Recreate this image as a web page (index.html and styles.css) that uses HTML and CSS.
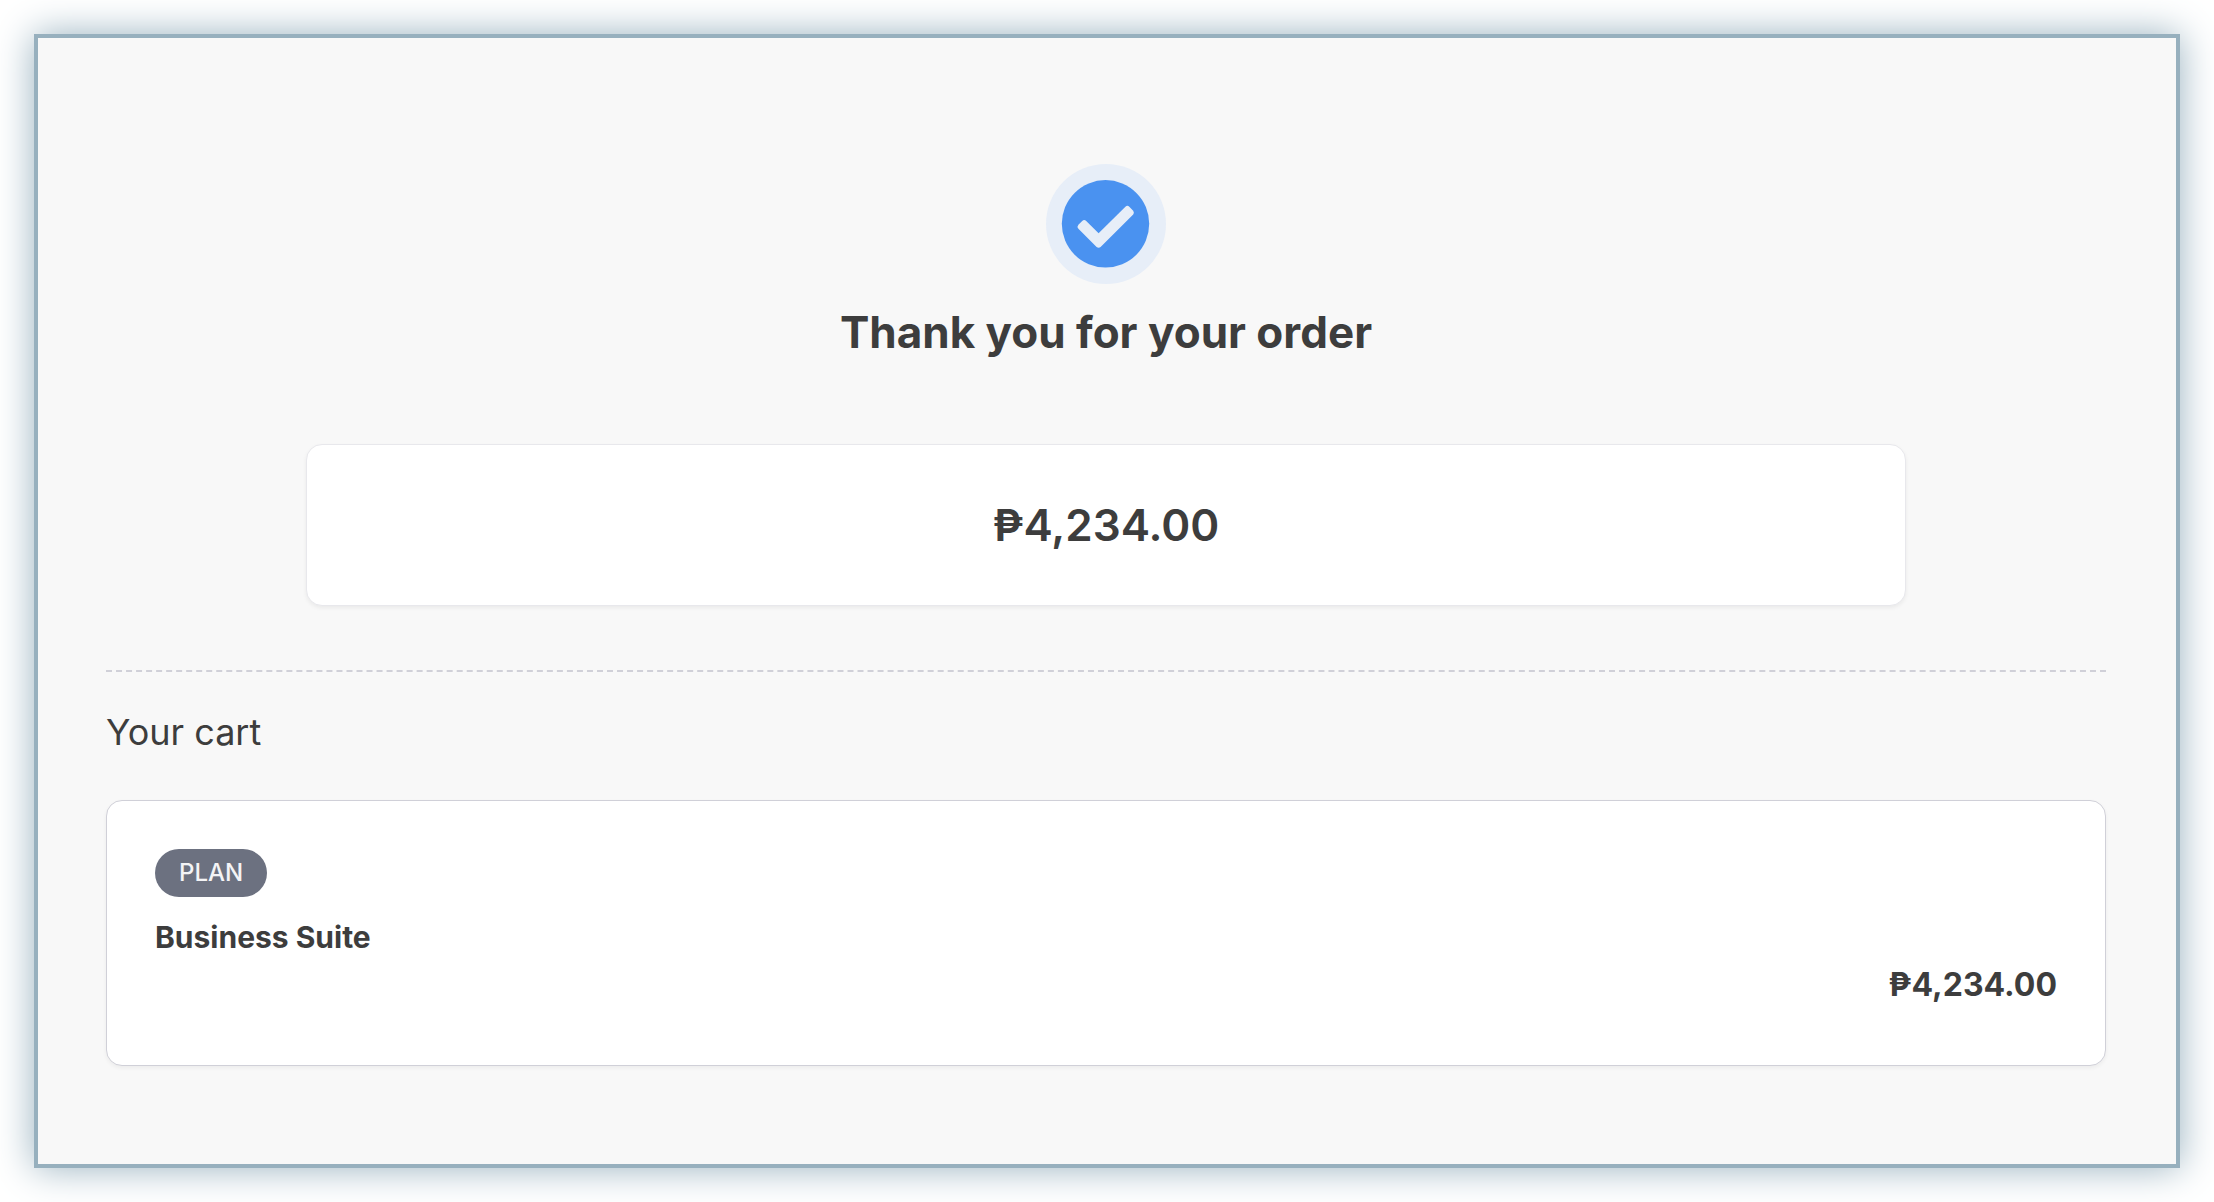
FILE: index.html
```
<!DOCTYPE html>
<html lang="en">
<head>
    <meta charset="UTF-8">
    <meta name="viewport" content="width=device-width, initial-scale=1.0">
    <title>Thank you for your order</title>
    <link rel="stylesheet" href="styles.css">
</head>
<body>
    <main class="container">
        <header class="confirmation">
            <svg class="check-icon" viewBox="0 0 120 120" aria-hidden="true">
                <circle cx="60" cy="60" r="60" fill="#e7eef8"/>
                <circle cx="59.5" cy="59.8" r="43.7" fill="#4a92f0"/>
                <path d="M32.4 60.7 L36.2 56.9 Q38.2 55.1 40.2 56.9 L52.6 69.2 L79.4 42.7 Q81.4 41 83.3 42.7 L87.2 46.7 Q88.6 48.6 87.2 50.5 L54.6 83 Q52.6 84.6 50.6 83 L32.4 64.7 Q30.6 62.7 32.4 60.7 Z" fill="#e7eef8"/>
            </svg>
            <h1>Thank you for your order</h1>
        </header>

        <div class="total">₱4,234.00</div>

        <section class="cart">
            <h2>Your cart</h2>
            <div class="item">
                <span class="badge">PLAN</span>
                <h3>Business Suite</h3>
                <p class="price">₱4,234.00</p>
            </div>
        </section>
    </main>
</body>
</html>
```

FILE: styles.css
```
* {
    box-sizing: border-box;
}
body {
    margin: 0;
    padding: 34px;
    font-family: Inter, "Liberation Sans", sans-serif;
    color: #3d3d3d;
    background: white;
}
h1, h2, h3, p {
    margin: 0;
}
.container {
    padding: 126px 70px 98px 68px;
    background: #f8f8f8;
    border: 4px solid #97b0be;
    box-shadow: 0 0 36px #97b0be;
}
.confirmation {
    text-align: center;
}
.check-icon {
    display: block;
    width: 120px;
    height: 120px;
    margin: 0 auto;
}
h1 {
    margin-top: 16px;
    font-size: 44px;
    line-height: 64px;
    font-weight: 700;
}
.total {
    width: 80%;
    margin: 80px auto 0;
    padding: 48px;
    text-align: center;
    font-size: 44px;
    line-height: 64px;
    font-weight: 600;
    background: white;
    border: 1px solid #e8e8ec;
    border-radius: 16px;
    box-shadow: 0 2px 4px rgba(0, 0, 0, 0.06);
}
.cart {
    margin-top: 64px;
    padding-top: 32px;
    border-top: 2px dashed #d0d0d8;
}
h2 {
    font-size: 36px;
    line-height: 56px;
    font-weight: 400;
}
.item {
    margin-top: 40px;
    padding: 48px;
    background: white;
    border: 1px solid #d0d0d8;
    border-radius: 16px;
    box-shadow: 0 2px 4px rgba(0, 0, 0, 0.05);
}
.badge {
    display: table;
    padding: 0 24px;
    font-size: 24px;
    line-height: 48px;
    font-weight: 500;
    color: #f4f4f6;
    background: #6c7180;
    border-radius: 24px;
}
h3 {
    margin-top: 16px;
    font-size: 30px;
    line-height: 48px;
    font-weight: 700;
}
.price {
    padding-bottom: 8px;
    font-size: 32px;
    line-height: 48px;
    font-weight: 700;
    text-align: right;
}
```
